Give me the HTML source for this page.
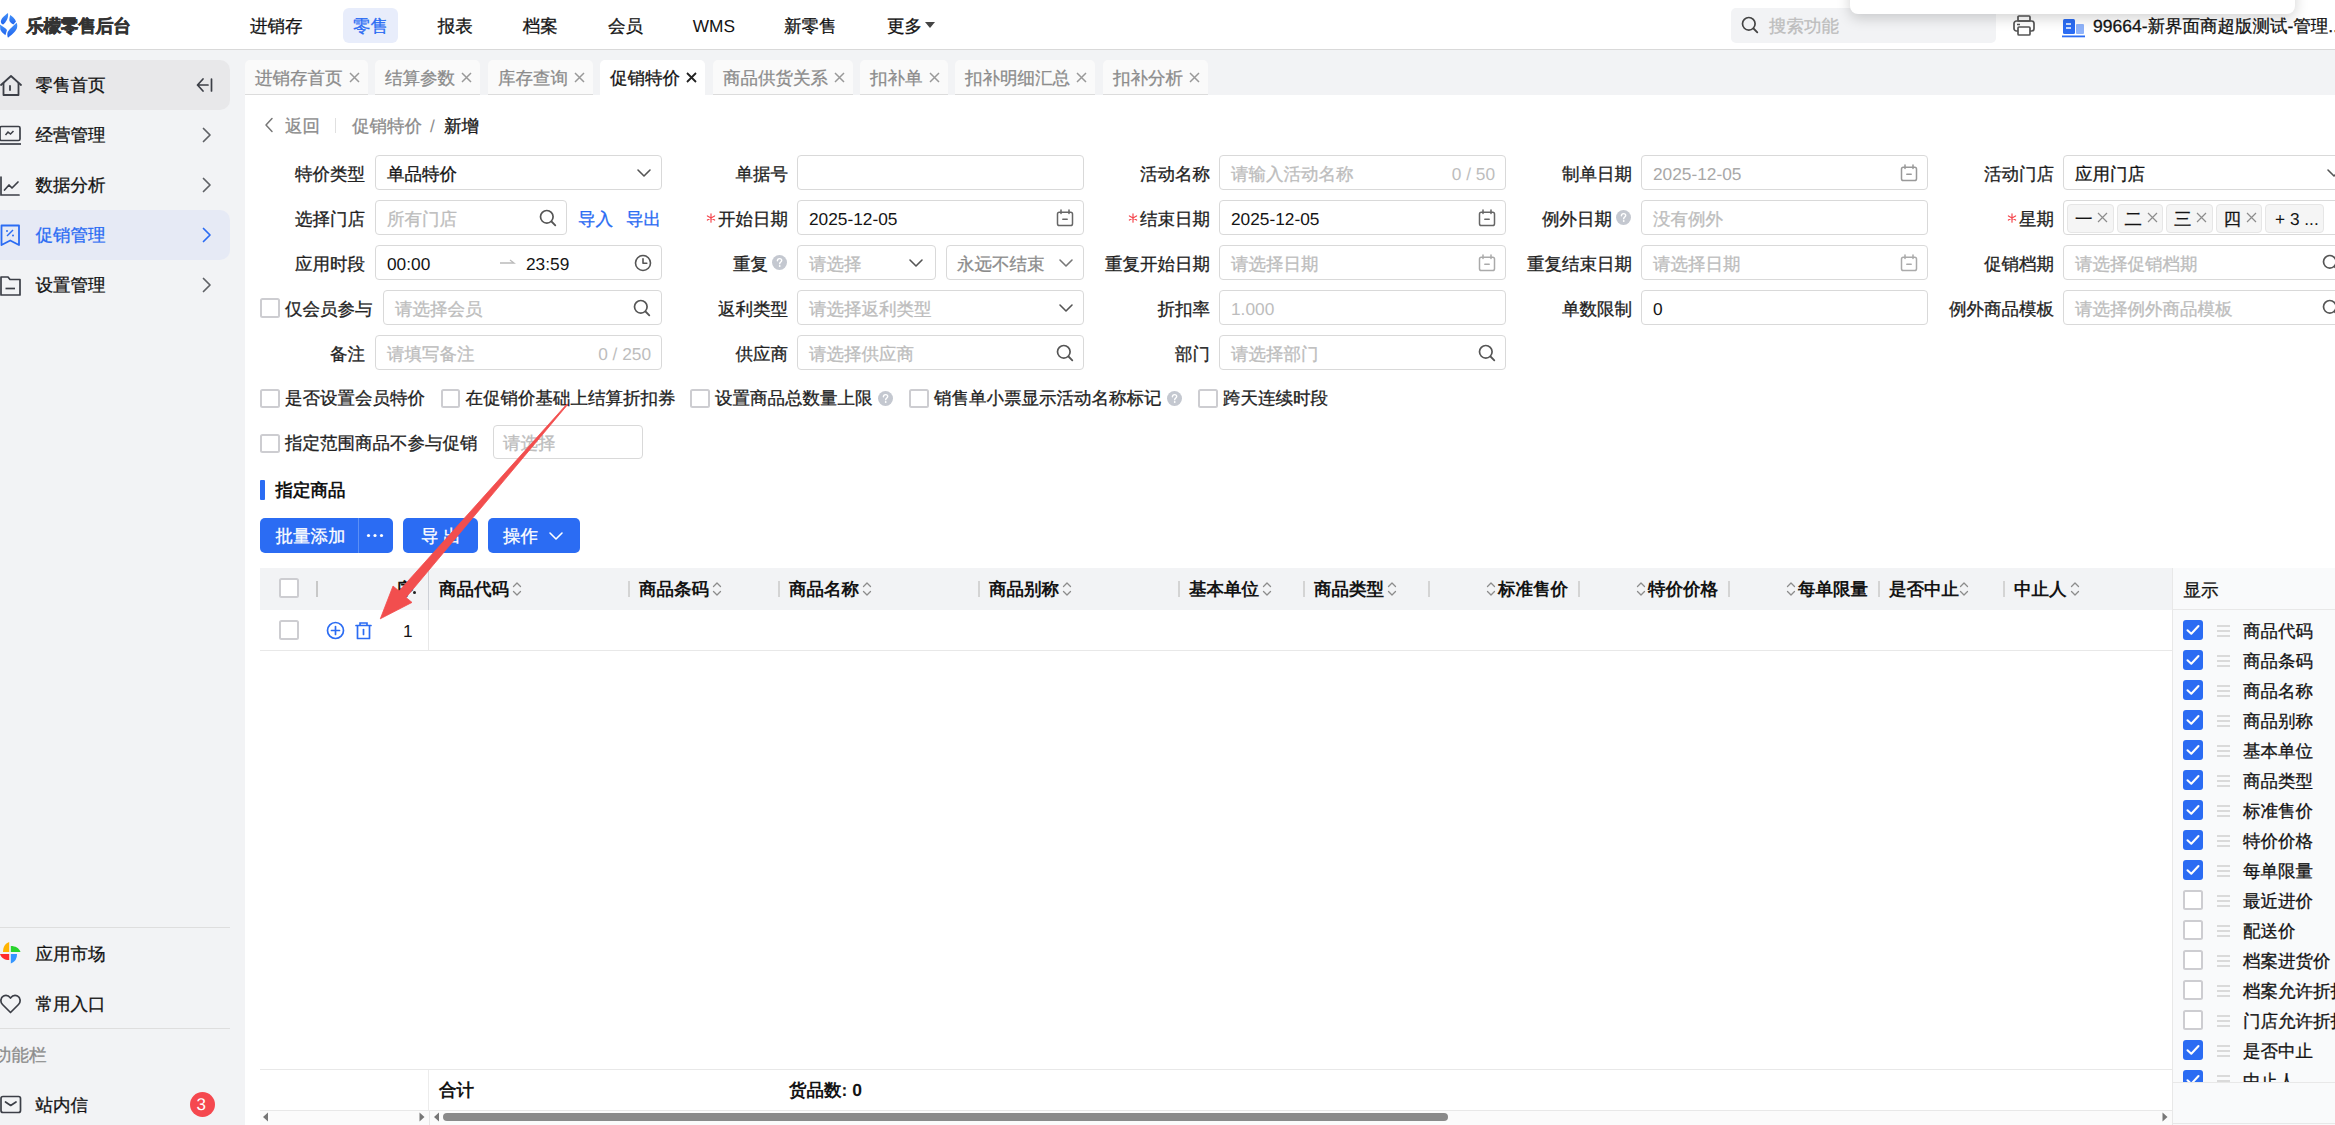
<!DOCTYPE html><html><head><meta charset="utf-8"><style>
html,body{margin:0;padding:0;width:2335px;height:1125px;overflow:hidden;background:#fff;font-family:"Liberation Sans",sans-serif;}
.t{position:absolute;white-space:nowrap;-webkit-text-stroke-width:0.3px;text-rendering:geometricPrecision;}
.b{position:absolute;box-sizing:content-box;}
</style></head><body>
<div class="b" style="left:0px;top:49px;width:245px;height:1076px;background:#f2f3f5"></div>
<div class="b" style="left:245px;top:49px;width:2090px;height:46px;background:#f2f3f5"></div>
<div class="b" style="left:0px;top:0px;width:2335px;height:49px;background:#fff"></div>
<div class="b" style="left:0px;top:49px;width:2335px;height:1px;background:#d9d9d9"></div>
<svg class="b" style="left:0px;top:12px" width="18" height="27" viewBox="0 0 18 27" fill="none"><defs><linearGradient id="lg" x1="0" y1="0" x2="0" y2="1"><stop offset="0" stop-color="#4592f8"/><stop offset="1" stop-color="#1f63ee"/></linearGradient></defs><g fill="url(#lg)"><path d="M8 1 C4 4 1 6.5 0.8 9.8 C1 11.5 2 12.3 3.2 12.6 C6 10 8.8 6 8 1 Z"/><path d="M10.2 3 C12.5 4.5 15 6.5 16 9.4 L13.4 12.6 C11 11 9 9.5 9.3 7.5 C9.4 6 9.8 4.5 10.2 3 Z"/><path d="M0 12.5 C2 14 5 15.5 7 18 L5.4 23.2 C3 21.5 1 19.5 0.3 17.5 Z"/><path d="M16.6 10.7 C17.3 12 17.5 14 17 16 C15.5 20.5 11 23 8 25.8 C7.2 24 7 21.5 7.8 19.7 C10 16 14 13.5 16.6 10.7 Z"/></g></svg>
<div class="t" style="left:26px;top:13.5px;height:24px;line-height:24px;color:#333;font-size:17.8px;font-weight:700;-webkit-text-stroke:0.5px #333;letter-spacing:-0.35px;">乐檬零售后台</div>
<div class="b" style="left:343px;top:8px;width:55px;height:35px;background:#e8edfb;border-radius:6px"></div>
<div class="t" style="left:250px;top:13.5px;height:24px;line-height:24px;color:#141414;font-size:17.5px;font-weight:400;">进销存</div>
<div class="t" style="left:353px;top:13.5px;height:24px;line-height:24px;color:#2b6cf3;font-size:17.5px;font-weight:400;">零售</div>
<div class="t" style="left:437.7px;top:13.5px;height:24px;line-height:24px;color:#141414;font-size:17.5px;font-weight:400;">报表</div>
<div class="t" style="left:522.7px;top:13.5px;height:24px;line-height:24px;color:#141414;font-size:17.5px;font-weight:400;">档案</div>
<div class="t" style="left:608px;top:13.5px;height:24px;line-height:24px;color:#141414;font-size:17.5px;font-weight:400;">会员</div>
<div class="t" style="left:692.7px;top:13.5px;height:24px;line-height:24px;color:#141414;font-size:17.3px;font-weight:400;-webkit-text-stroke-width:0;">WMS</div>
<div class="t" style="left:784px;top:13.5px;height:24px;line-height:24px;color:#141414;font-size:17.5px;font-weight:400;">新零售</div>
<div class="t" style="left:887px;top:13.5px;height:24px;line-height:24px;color:#141414;font-size:17.5px;font-weight:400;">更多</div>
<svg class="b" style="left:924px;top:21px" width="12" height="8" viewBox="0 0 12 8" fill="none"><path d="M1 1 L11 1 L6 7 Z" fill="#444"/></svg>
<div class="b" style="left:1731px;top:8px;width:265px;height:35px;background:#f2f3f5;border-radius:5px"></div>
<svg class="b" style="left:1741px;top:16px" width="18" height="18" viewBox="0 0 18 18" fill="none"><circle cx="7.8" cy="7.8" r="6.3" stroke="#444" stroke-width="1.7"/><path d="M12.5 12.5 L16.3 16.3" stroke="#444" stroke-width="1.8" stroke-linecap="round"/></svg>
<div class="t" style="left:1769px;top:13.5px;height:24px;line-height:24px;color:#bdbdbd;font-size:17.5px;font-weight:400;">搜索功能</div>
<svg class="b" style="left:2012px;top:14px" width="24" height="24" viewBox="0 0 24 24" fill="none"><rect x="6" y="2" width="12" height="5" rx="1" stroke="#555" stroke-width="1.7"/><rect x="2" y="7" width="20" height="10" rx="2.5" stroke="#555" stroke-width="1.7"/><rect x="6" y="13" width="12" height="8" rx="1" fill="#fff" stroke="#555" stroke-width="1.7"/><path d="M5 10.5 H8" stroke="#555" stroke-width="1.5"/></svg>
<svg class="b" style="left:2062px;top:18px" width="24" height="20" viewBox="0 0 24 20" fill="none"><rect x="1" y="1" width="12" height="15" rx="1.5" fill="#2b6cf3"/><rect x="14" y="6" width="8" height="10" rx="1" fill="#8fb3fa"/><path d="M4 6 H9 M4 10 H9" stroke="#fff" stroke-width="1.5"/><rect x="0" y="17.5" width="23" height="1.8" fill="#2b6cf3"/></svg>
<div class="t" style="left:2093px;top:13.5px;height:24px;line-height:24px;color:#141414;font-size:17.5px;font-weight:400;">99664-新界面商超版测试-管理...</div>
<div class="b" style="left:1850px;top:-20px;width:445px;height:34px;background:#fff;border-radius:8px;box-shadow:0 4px 14px rgba(0,0,0,.18)"></div>
<div class="b" style="left:0px;top:60px;width:230px;height:50px;background:#e8e8ea;border-radius:0 10px 10px 0"></div>
<div class="b" style="left:0px;top:210px;width:230px;height:50px;background:#e6eaf5;border-radius:0 10px 10px 0"></div>
<div class="t" style="left:35.5px;top:73.0px;height:24px;line-height:24px;color:#141414;font-size:17.5px;font-weight:400;">零售首页</div>
<div class="t" style="left:35.5px;top:123.0px;height:24px;line-height:24px;color:#141414;font-size:17.5px;font-weight:400;">经营管理</div>
<div class="t" style="left:35.5px;top:173.0px;height:24px;line-height:24px;color:#141414;font-size:17.5px;font-weight:400;">数据分析</div>
<div class="t" style="left:35.5px;top:223.0px;height:24px;line-height:24px;color:#2b6cf3;font-size:17.5px;font-weight:400;">促销管理</div>
<div class="t" style="left:35.5px;top:273.0px;height:24px;line-height:24px;color:#141414;font-size:17.5px;font-weight:400;">设置管理</div>
<svg class="b" style="left:0px;top:74px" width="24" height="24" viewBox="0 0 24 24" fill="none"><path d="M1 11 L11 2 L21 11" stroke="#3c3f47" stroke-width="1.8" stroke-linecap="round" stroke-linejoin="round"/><path d="M3.5 9 V21 H18.5 V9" stroke="#3c3f47" stroke-width="1.8" stroke-linejoin="round"/><path d="M10 12 V16" stroke="#3c3f47" stroke-width="1.8" stroke-linecap="round"/></svg>
<svg class="b" style="left:196px;top:77px" width="18" height="16" viewBox="0 0 18 16" fill="none"><path d="M7 2 L1.5 8 L7 14 M1.5 8 H12 M15.5 2 V14" stroke="#3c3f47" stroke-width="1.7" stroke-linecap="round" stroke-linejoin="round"/></svg>
<svg class="b" style="left:0px;top:125px" width="22" height="22" viewBox="0 0 22 22" fill="none"><rect x="0" y="1.5" width="20" height="14" rx="1.5" stroke="#3c3f47" stroke-width="1.7"/><path d="M0 19 H21" stroke="#3c3f47" stroke-width="1.7"/><path d="M5.5 10 L8 7 L10.5 9 L13.5 6" stroke="#3c3f47" stroke-width="1.5"/></svg>
<svg class="b" style="left:0px;top:176px" width="22" height="20" viewBox="0 0 22 20" fill="none"><path d="M1 1 V19 H19" stroke="#3c3f47" stroke-width="1.7" stroke-linecap="round"/><path d="M4.5 14 L9 9 L12 12 L18 6" stroke="#3c3f47" stroke-width="1.7" stroke-linecap="round" stroke-linejoin="round"/></svg>
<svg class="b" style="left:0px;top:224px" width="22" height="22" viewBox="0 0 22 22" fill="none"><path d="M1.5 1.5 H19 V21 L10.2 16.5 L1.5 21 Z" stroke="#2b6cf3" stroke-width="1.8" stroke-linejoin="round"/><path d="M7 12 L13 6" stroke="#2b6cf3" stroke-width="1.5"/><circle cx="7" cy="7" r="1" fill="#2b6cf3"/><circle cx="13" cy="11.5" r="1" fill="#2b6cf3"/></svg>
<svg class="b" style="left:0px;top:275px" width="22" height="22" viewBox="0 0 22 22" fill="none"><path d="M1 2 H8 L10 4.5 H20 V20 H1 Z" stroke="#3c3f47" stroke-width="1.7" stroke-linejoin="round"/><path d="M5.5 13.5 H15" stroke="#3c3f47" stroke-width="1.7"/></svg>
<svg class="b" style="left:201px;top:127px" width="12" height="16" viewBox="0 0 12 16" fill="none"><path d="M2.5 1.5 L9 8 L2.5 14.5" stroke="#5f6166" stroke-width="1.7" stroke-linecap="round" stroke-linejoin="round"/></svg>
<svg class="b" style="left:201px;top:177px" width="12" height="16" viewBox="0 0 12 16" fill="none"><path d="M2.5 1.5 L9 8 L2.5 14.5" stroke="#5f6166" stroke-width="1.7" stroke-linecap="round" stroke-linejoin="round"/></svg>
<svg class="b" style="left:201px;top:227px" width="12" height="16" viewBox="0 0 12 16" fill="none"><path d="M2.5 1.5 L9 8 L2.5 14.5" stroke="#2b6cf3" stroke-width="1.7" stroke-linecap="round" stroke-linejoin="round"/></svg>
<svg class="b" style="left:201px;top:277px" width="12" height="16" viewBox="0 0 12 16" fill="none"><path d="M2.5 1.5 L9 8 L2.5 14.5" stroke="#5f6166" stroke-width="1.7" stroke-linecap="round" stroke-linejoin="round"/></svg>
<div class="b" style="left:0px;top:927px;width:230px;height:1px;background:#dedede"></div>
<div class="b" style="left:0px;top:1028px;width:230px;height:1px;background:#dedede"></div>
<div class="t" style="left:35.5px;top:941.5px;height:24px;line-height:24px;color:#141414;font-size:17.5px;font-weight:400;">应用市场</div>
<div class="t" style="left:35.5px;top:992.0px;height:24px;line-height:24px;color:#141414;font-size:17.5px;font-weight:400;">常用入口</div>
<div class="t" style="left:-6px;top:1042.5px;height:24px;line-height:24px;color:#8c8c8c;font-size:17.5px;font-weight:400;">功能栏</div>
<div class="t" style="left:35.5px;top:1092.5px;height:24px;line-height:24px;color:#141414;font-size:17.5px;font-weight:400;">站内信</div>
<svg class="b" style="left:0px;top:935px" width="22" height="30" viewBox="0 0 22 30" fill="none"><path d="M9.2 7 L9.2 17 L3 17 C3 12 5 8.5 9.2 7 Z" fill="#ffb300"/><path d="M10.8 17 L10.8 11 C15.5 11 19 13 20.5 17 Z" fill="#28d32c"/><path d="M10.8 19 L17 19 C17 23.5 15 27 10.8 28.5 Z" fill="#3395ff"/><path d="M9.2 19 L9.2 25 C4.5 25 1.5 23 0 19 Z" fill="#ff2b2b"/></svg>
<svg class="b" style="left:0px;top:993px" width="22" height="22" viewBox="0 0 22 22" fill="none"><path d="M10.5 19.5 L2.5 11.5 C0 9 0.5 4.5 3.5 3 C6 1.8 8.8 2.8 10.5 5 C12.2 2.8 15 1.8 17.5 3 C20.5 4.5 21 9 18.5 11.5 Z" stroke="#3c3f47" stroke-width="1.7" stroke-linejoin="round"/></svg>
<svg class="b" style="left:0px;top:1095px" width="22" height="20" viewBox="0 0 22 20" fill="none"><rect x="1" y="1.5" width="19.5" height="16" rx="2" stroke="#3c3f47" stroke-width="1.7"/><path d="M5.5 7 L10.7 10.5 L16 7" stroke="#3c3f47" stroke-width="1.7" stroke-linecap="round" stroke-linejoin="round"/></svg>
<div class="b" style="left:190px;top:1092px;width:25px;height:25px;background:#f5484f;border-radius:50%"></div>
<div class="t" style="left:196.5px;top:1092.5px;height:24px;line-height:24px;color:#fff;font-size:17px;font-weight:400;-webkit-text-stroke-width:0;">3</div>
<div class="b" style="left:245px;top:95px;width:2090px;height:1030px;background:#fff"></div>
<div class="b" style="left:245px;top:60px;width:123px;height:34px;background:#fafafa;border-radius:5px 5px 0 0;border-bottom:1px solid #dcdcdc"></div>
<div class="t" style="left:255px;top:65.5px;height:24px;line-height:24px;color:#8c8c8c;font-size:17.5px;font-weight:400;">进销存首页</div>
<svg class="b" style="left:349px;top:72px" width="11" height="11" viewBox="0 0 11 11" fill="none"><path d="M1 1 L10 10 M10 1 L1 10" stroke="#999" stroke-width="1.5"/></svg>
<div class="b" style="left:375px;top:60px;width:105px;height:34px;background:#fafafa;border-radius:5px 5px 0 0;border-bottom:1px solid #dcdcdc"></div>
<div class="t" style="left:385px;top:65.5px;height:24px;line-height:24px;color:#8c8c8c;font-size:17.5px;font-weight:400;">结算参数</div>
<svg class="b" style="left:461px;top:72px" width="11" height="11" viewBox="0 0 11 11" fill="none"><path d="M1 1 L10 10 M10 1 L1 10" stroke="#999" stroke-width="1.5"/></svg>
<div class="b" style="left:488px;top:60px;width:105px;height:34px;background:#fafafa;border-radius:5px 5px 0 0;border-bottom:1px solid #dcdcdc"></div>
<div class="t" style="left:498px;top:65.5px;height:24px;line-height:24px;color:#8c8c8c;font-size:17.5px;font-weight:400;">库存查询</div>
<svg class="b" style="left:574px;top:72px" width="11" height="11" viewBox="0 0 11 11" fill="none"><path d="M1 1 L10 10 M10 1 L1 10" stroke="#999" stroke-width="1.5"/></svg>
<div class="b" style="left:600px;top:60px;width:105px;height:35px;background:#fff;border-radius:5px 5px 0 0"></div>
<div class="t" style="left:610px;top:65.5px;height:24px;line-height:24px;color:#141414;font-size:17.5px;font-weight:400;">促销特价</div>
<svg class="b" style="left:686px;top:72px" width="11" height="11" viewBox="0 0 11 11" fill="none"><path d="M1 1 L10 10 M10 1 L1 10" stroke="#222" stroke-width="1.8"/></svg>
<div class="b" style="left:713px;top:60px;width:140px;height:34px;background:#fafafa;border-radius:5px 5px 0 0;border-bottom:1px solid #dcdcdc"></div>
<div class="t" style="left:723px;top:65.5px;height:24px;line-height:24px;color:#8c8c8c;font-size:17.5px;font-weight:400;">商品供货关系</div>
<svg class="b" style="left:834px;top:72px" width="11" height="11" viewBox="0 0 11 11" fill="none"><path d="M1 1 L10 10 M10 1 L1 10" stroke="#999" stroke-width="1.5"/></svg>
<div class="b" style="left:860px;top:60px;width:88px;height:34px;background:#fafafa;border-radius:5px 5px 0 0;border-bottom:1px solid #dcdcdc"></div>
<div class="t" style="left:870px;top:65.5px;height:24px;line-height:24px;color:#8c8c8c;font-size:17.5px;font-weight:400;">扣补单</div>
<svg class="b" style="left:929px;top:72px" width="11" height="11" viewBox="0 0 11 11" fill="none"><path d="M1 1 L10 10 M10 1 L1 10" stroke="#999" stroke-width="1.5"/></svg>
<div class="b" style="left:955px;top:60px;width:140px;height:34px;background:#fafafa;border-radius:5px 5px 0 0;border-bottom:1px solid #dcdcdc"></div>
<div class="t" style="left:965px;top:65.5px;height:24px;line-height:24px;color:#8c8c8c;font-size:17.5px;font-weight:400;">扣补明细汇总</div>
<svg class="b" style="left:1076px;top:72px" width="11" height="11" viewBox="0 0 11 11" fill="none"><path d="M1 1 L10 10 M10 1 L1 10" stroke="#999" stroke-width="1.5"/></svg>
<div class="b" style="left:1103px;top:60px;width:105px;height:34px;background:#fafafa;border-radius:5px 5px 0 0;border-bottom:1px solid #dcdcdc"></div>
<div class="t" style="left:1113px;top:65.5px;height:24px;line-height:24px;color:#8c8c8c;font-size:17.5px;font-weight:400;">扣补分析</div>
<svg class="b" style="left:1189px;top:72px" width="11" height="11" viewBox="0 0 11 11" fill="none"><path d="M1 1 L10 10 M10 1 L1 10" stroke="#999" stroke-width="1.5"/></svg>
<svg class="b" style="left:264px;top:117px" width="10" height="16" viewBox="0 0 10 16" fill="none"><path d="M8 1.5 L2 8 L8 14.5" stroke="#777" stroke-width="1.5" stroke-linecap="round" stroke-linejoin="round"/></svg>
<div class="t" style="left:285px;top:113.5px;height:24px;line-height:24px;color:#8c8c8c;font-size:17.5px;font-weight:400;">返回</div>
<div class="b" style="left:335px;top:118px;width:1px;height:15px;background:#e0e0e0"></div>
<div class="t" style="left:352px;top:113.5px;height:24px;line-height:24px;color:#8c8c8c;font-size:17.5px;font-weight:400;">促销特价</div>
<div class="t" style="left:430px;top:113.5px;height:24px;line-height:24px;color:#8c8c8c;font-size:17.3px;font-weight:400;-webkit-text-stroke-width:0;">/</div>
<div class="t" style="left:444px;top:113.5px;height:24px;line-height:24px;color:#141414;font-size:17.5px;font-weight:400;">新增</div>
<div class="t" style="right:1970px;top:161.5px;height:24px;line-height:24px;color:#222222;font-size:17.5px;font-weight:400;">特价类型</div>
<div class="b" style="left:375px;top:155px;width:285px;height:33px;border:1px solid #d9d9d9;border-radius:4px;background:#fff"></div>
<div class="t" style="left:387px;top:161.5px;height:24px;line-height:24px;color:#141414;font-size:17.5px;font-weight:400;">单品特价</div>
<svg class="b" style="left:636px;top:166.5px" width="16" height="12" viewBox="0 0 16 12" fill="none"><path d="M2 3.0 L8 9.0 L14 3.0" stroke="#555" stroke-width="1.6" stroke-linecap="round" stroke-linejoin="round"/></svg>
<div class="t" style="right:1970px;top:206.5px;height:24px;line-height:24px;color:#222222;font-size:17.5px;font-weight:400;">选择门店</div>
<div class="b" style="left:375px;top:200px;width:190px;height:33px;border:1px solid #d9d9d9;border-radius:4px;background:#fff"></div>
<div class="t" style="left:387px;top:206.5px;height:24px;line-height:24px;color:#bdbdbd;font-size:17.5px;font-weight:400;">所有门店</div>
<svg class="b" style="left:539px;top:209px" width="18" height="18" viewBox="0 0 18 18" fill="none"><circle cx="7.8" cy="7.8" r="6.3" stroke="#555" stroke-width="1.7"/><path d="M12.5 12.5 L16.3 16.3" stroke="#555" stroke-width="1.8" stroke-linecap="round"/></svg>
<div class="t" style="left:578px;top:206.5px;height:24px;line-height:24px;color:#2b6cf3;font-size:17.5px;font-weight:400;">导入</div>
<div class="t" style="left:626px;top:206.5px;height:24px;line-height:24px;color:#2b6cf3;font-size:17.5px;font-weight:400;">导出</div>
<div class="t" style="right:1970px;top:251.5px;height:24px;line-height:24px;color:#222222;font-size:17.5px;font-weight:400;">应用时段</div>
<div class="b" style="left:375px;top:245px;width:285px;height:33px;border:1px solid #d9d9d9;border-radius:4px;background:#fff"></div>
<div class="t" style="left:387px;top:251.5px;height:24px;line-height:24px;color:#141414;font-size:17.3px;font-weight:400;-webkit-text-stroke-width:0;">00:00</div>
<svg class="b" style="left:499px;top:257px" width="17" height="10" viewBox="0 0 17 10" fill="none"><path d="M1 6 H15 L11 3" stroke="#bbb" stroke-width="1.3" fill="none"/></svg>
<div class="t" style="left:526px;top:251.5px;height:24px;line-height:24px;color:#141414;font-size:17.3px;font-weight:400;-webkit-text-stroke-width:0;">23:59</div>
<svg class="b" style="left:634px;top:254px" width="18" height="18" viewBox="0 0 18 18" fill="none"><circle cx="9" cy="9" r="7.5" stroke="#555" stroke-width="1.6"/><path d="M9 4.8 V9.3 H12.8" stroke="#555" stroke-width="1.6" stroke-linecap="round" stroke-linejoin="round"/></svg>
<div class="b" style="left:260px;top:298.3px;width:15.5px;height:15.5px;border:2px solid #cdcdd1;border-radius:2.5px;background:#fff"></div>
<div class="t" style="left:285px;top:296.5px;height:24px;line-height:24px;color:#222222;font-size:17.5px;font-weight:400;">仅会员参与</div>
<div class="b" style="left:383px;top:290px;width:277px;height:33px;border:1px solid #d9d9d9;border-radius:4px;background:#fff"></div>
<div class="t" style="left:395px;top:296.5px;height:24px;line-height:24px;color:#bdbdbd;font-size:17.5px;font-weight:400;">请选择会员</div>
<svg class="b" style="left:633px;top:299px" width="18" height="18" viewBox="0 0 18 18" fill="none"><circle cx="7.8" cy="7.8" r="6.3" stroke="#555" stroke-width="1.7"/><path d="M12.5 12.5 L16.3 16.3" stroke="#555" stroke-width="1.8" stroke-linecap="round"/></svg>
<div class="t" style="right:1970px;top:341.5px;height:24px;line-height:24px;color:#222222;font-size:17.5px;font-weight:400;">备注</div>
<div class="b" style="left:375px;top:335px;width:285px;height:33px;border:1px solid #d9d9d9;border-radius:4px;background:#fff"></div>
<div class="t" style="left:387px;top:341.5px;height:24px;line-height:24px;color:#bdbdbd;font-size:17.5px;font-weight:400;">请填写备注</div>
<div class="t" style="right:1684px;top:341.5px;height:24px;line-height:24px;color:#bdbdbd;font-size:17.3px;font-weight:400;-webkit-text-stroke-width:0;">0 / 250</div>
<div class="t" style="right:1547px;top:161.5px;height:24px;line-height:24px;color:#222222;font-size:17.5px;font-weight:400;">单据号</div>
<div class="b" style="left:797px;top:155px;width:285px;height:33px;border:1px solid #d9d9d9;border-radius:4px;background:#fff"></div>
<div class="t" style="right:1547px;top:206.5px;height:24px;line-height:24px;color:#222222;font-size:17.5px;font-weight:400;">开始日期</div>
<svg class="b" style="left:706.3px;top:212.5px" width="10" height="10" viewBox="0 0 10 10" fill="none"><path d="M5 0.8 V9.2 M1.4 2.9 L8.6 7.1 M8.6 2.9 L1.4 7.1" stroke="#f5484f" stroke-width="1.2" stroke-linecap="round"/></svg>
<div class="b" style="left:797px;top:200px;width:285px;height:33px;border:1px solid #d9d9d9;border-radius:4px;background:#fff"></div>
<div class="t" style="left:809px;top:206.5px;height:24px;line-height:24px;color:#141414;font-size:17.3px;font-weight:400;-webkit-text-stroke-width:0;">2025-12-05</div>
<svg class="b" style="left:1056px;top:209px" width="18" height="18" viewBox="0 0 18 18" fill="none"><rect x="1.5" y="3.2" width="15" height="13.3" rx="1.8" stroke="#666" stroke-width="1.5"/><path d="M5 1 V4.5 M13 1 V4.5" stroke="#666" stroke-width="1.5" stroke-linecap="round"/><path d="M6.8 10.2 H11.2" stroke="#666" stroke-width="1.5" stroke-linecap="round"/></svg>
<svg class="b" style="left:772px;top:255.0px" width="15" height="15" viewBox="0 0 15 15" fill="none"><circle cx="7.5" cy="7.5" r="7.5" fill="#c4c8d0"/><path d="M5.4 5.8 C5.4 4.4 6.4 3.6 7.6 3.6 C8.8 3.6 9.7 4.4 9.7 5.5 C9.7 6.9 7.7 7.1 7.7 8.7" stroke="#fff" stroke-width="1.4" stroke-linecap="round" fill="none"/><circle cx="7.7" cy="11" r="0.9" fill="#fff"/></svg>
<div class="t" style="right:1567px;top:251.5px;height:24px;line-height:24px;color:#222222;font-size:17.5px;font-weight:400;">重复</div>
<div class="b" style="left:797px;top:245px;width:137px;height:33px;border:1px solid #d9d9d9;border-radius:4px;background:#fff"></div>
<div class="t" style="left:809px;top:251.5px;height:24px;line-height:24px;color:#bdbdbd;font-size:17.5px;font-weight:400;">请选择</div>
<svg class="b" style="left:908px;top:256.5px" width="16" height="12" viewBox="0 0 16 12" fill="none"><path d="M2 3.0 L8 9.0 L14 3.0" stroke="#555" stroke-width="1.6" stroke-linecap="round" stroke-linejoin="round"/></svg>
<div class="b" style="left:946px;top:245px;width:136px;height:33px;border:1px solid #d9d9d9;border-radius:4px;background:#fff"></div>
<div class="t" style="left:957px;top:251.5px;height:24px;line-height:24px;color:#8c8c8c;font-size:17.5px;font-weight:400;">永远不结束</div>
<svg class="b" style="left:1058px;top:256.5px" width="16" height="12" viewBox="0 0 16 12" fill="none"><path d="M2 3.0 L8 9.0 L14 3.0" stroke="#777" stroke-width="1.6" stroke-linecap="round" stroke-linejoin="round"/></svg>
<div class="t" style="right:1547px;top:296.5px;height:24px;line-height:24px;color:#222222;font-size:17.5px;font-weight:400;">返利类型</div>
<div class="b" style="left:797px;top:290px;width:285px;height:33px;border:1px solid #d9d9d9;border-radius:4px;background:#fff"></div>
<div class="t" style="left:809px;top:296.5px;height:24px;line-height:24px;color:#bdbdbd;font-size:17.5px;font-weight:400;">请选择返利类型</div>
<svg class="b" style="left:1058px;top:301.5px" width="16" height="12" viewBox="0 0 16 12" fill="none"><path d="M2 3.0 L8 9.0 L14 3.0" stroke="#555" stroke-width="1.6" stroke-linecap="round" stroke-linejoin="round"/></svg>
<div class="t" style="right:1547px;top:341.5px;height:24px;line-height:24px;color:#222222;font-size:17.5px;font-weight:400;">供应商</div>
<div class="b" style="left:797px;top:335px;width:285px;height:33px;border:1px solid #d9d9d9;border-radius:4px;background:#fff"></div>
<div class="t" style="left:809px;top:341.5px;height:24px;line-height:24px;color:#bdbdbd;font-size:17.5px;font-weight:400;">请选择供应商</div>
<svg class="b" style="left:1056px;top:344px" width="18" height="18" viewBox="0 0 18 18" fill="none"><circle cx="7.8" cy="7.8" r="6.3" stroke="#555" stroke-width="1.7"/><path d="M12.5 12.5 L16.3 16.3" stroke="#555" stroke-width="1.8" stroke-linecap="round"/></svg>
<div class="t" style="right:1125px;top:161.5px;height:24px;line-height:24px;color:#222222;font-size:17.5px;font-weight:400;">活动名称</div>
<div class="b" style="left:1219px;top:155px;width:285px;height:33px;border:1px solid #d9d9d9;border-radius:4px;background:#fff"></div>
<div class="t" style="left:1231px;top:161.5px;height:24px;line-height:24px;color:#bdbdbd;font-size:17.5px;font-weight:400;">请输入活动名称</div>
<div class="t" style="right:840px;top:161.5px;height:24px;line-height:24px;color:#bdbdbd;font-size:17.3px;font-weight:400;-webkit-text-stroke-width:0;">0 / 50</div>
<div class="t" style="right:1125px;top:206.5px;height:24px;line-height:24px;color:#222222;font-size:17.5px;font-weight:400;">结束日期</div>
<svg class="b" style="left:1128.3px;top:212.5px" width="10" height="10" viewBox="0 0 10 10" fill="none"><path d="M5 0.8 V9.2 M1.4 2.9 L8.6 7.1 M8.6 2.9 L1.4 7.1" stroke="#f5484f" stroke-width="1.2" stroke-linecap="round"/></svg>
<div class="b" style="left:1219px;top:200px;width:285px;height:33px;border:1px solid #d9d9d9;border-radius:4px;background:#fff"></div>
<div class="t" style="left:1231px;top:206.5px;height:24px;line-height:24px;color:#141414;font-size:17.3px;font-weight:400;-webkit-text-stroke-width:0;">2025-12-05</div>
<svg class="b" style="left:1478px;top:209px" width="18" height="18" viewBox="0 0 18 18" fill="none"><rect x="1.5" y="3.2" width="15" height="13.3" rx="1.8" stroke="#666" stroke-width="1.5"/><path d="M5 1 V4.5 M13 1 V4.5" stroke="#666" stroke-width="1.5" stroke-linecap="round"/><path d="M6.8 10.2 H11.2" stroke="#666" stroke-width="1.5" stroke-linecap="round"/></svg>
<div class="t" style="right:1125px;top:251.5px;height:24px;line-height:24px;color:#222222;font-size:17.5px;font-weight:400;">重复开始日期</div>
<div class="b" style="left:1219px;top:245px;width:285px;height:33px;border:1px solid #d9d9d9;border-radius:4px;background:#fff"></div>
<div class="t" style="left:1231px;top:251.5px;height:24px;line-height:24px;color:#bdbdbd;font-size:17.5px;font-weight:400;">请选择日期</div>
<svg class="b" style="left:1478px;top:254px" width="18" height="18" viewBox="0 0 18 18" fill="none"><rect x="1.5" y="3.2" width="15" height="13.3" rx="1.8" stroke="#aaa" stroke-width="1.5"/><path d="M5 1 V4.5 M13 1 V4.5" stroke="#aaa" stroke-width="1.5" stroke-linecap="round"/><path d="M6.8 10.2 H11.2" stroke="#aaa" stroke-width="1.5" stroke-linecap="round"/></svg>
<div class="t" style="right:1125px;top:296.5px;height:24px;line-height:24px;color:#222222;font-size:17.5px;font-weight:400;">折扣率</div>
<div class="b" style="left:1219px;top:290px;width:285px;height:33px;border:1px solid #d9d9d9;border-radius:4px;background:#fff"></div>
<div class="t" style="left:1231px;top:296.5px;height:24px;line-height:24px;color:#bdbdbd;font-size:17.3px;font-weight:400;-webkit-text-stroke-width:0;">1.000</div>
<div class="t" style="right:1125px;top:341.5px;height:24px;line-height:24px;color:#222222;font-size:17.5px;font-weight:400;">部门</div>
<div class="b" style="left:1219px;top:335px;width:285px;height:33px;border:1px solid #d9d9d9;border-radius:4px;background:#fff"></div>
<div class="t" style="left:1231px;top:341.5px;height:24px;line-height:24px;color:#bdbdbd;font-size:17.5px;font-weight:400;">请选择部门</div>
<svg class="b" style="left:1478px;top:344px" width="18" height="18" viewBox="0 0 18 18" fill="none"><circle cx="7.8" cy="7.8" r="6.3" stroke="#555" stroke-width="1.7"/><path d="M12.5 12.5 L16.3 16.3" stroke="#555" stroke-width="1.8" stroke-linecap="round"/></svg>
<div class="t" style="right:703px;top:161.5px;height:24px;line-height:24px;color:#222222;font-size:17.5px;font-weight:400;">制单日期</div>
<div class="b" style="left:1641px;top:155px;width:285px;height:33px;border:1px solid #d9d9d9;border-radius:4px;background:#fff"></div>
<div class="t" style="left:1653px;top:161.5px;height:24px;line-height:24px;color:#a8a8a8;font-size:17.3px;font-weight:400;-webkit-text-stroke-width:0;">2025-12-05</div>
<svg class="b" style="left:1900px;top:164px" width="18" height="18" viewBox="0 0 18 18" fill="none"><rect x="1.5" y="3.2" width="15" height="13.3" rx="1.8" stroke="#999" stroke-width="1.5"/><path d="M5 1 V4.5 M13 1 V4.5" stroke="#999" stroke-width="1.5" stroke-linecap="round"/><path d="M6.8 10.2 H11.2" stroke="#999" stroke-width="1.5" stroke-linecap="round"/></svg>
<svg class="b" style="left:1616px;top:210.0px" width="15" height="15" viewBox="0 0 15 15" fill="none"><circle cx="7.5" cy="7.5" r="7.5" fill="#c4c8d0"/><path d="M5.4 5.8 C5.4 4.4 6.4 3.6 7.6 3.6 C8.8 3.6 9.7 4.4 9.7 5.5 C9.7 6.9 7.7 7.1 7.7 8.7" stroke="#fff" stroke-width="1.4" stroke-linecap="round" fill="none"/><circle cx="7.7" cy="11" r="0.9" fill="#fff"/></svg>
<div class="t" style="right:723px;top:206.5px;height:24px;line-height:24px;color:#222222;font-size:17.5px;font-weight:400;">例外日期</div>
<div class="b" style="left:1641px;top:200px;width:285px;height:33px;border:1px solid #d9d9d9;border-radius:4px;background:#fff"></div>
<div class="t" style="left:1653px;top:206.5px;height:24px;line-height:24px;color:#bdbdbd;font-size:17.5px;font-weight:400;">没有例外</div>
<div class="t" style="right:703px;top:251.5px;height:24px;line-height:24px;color:#222222;font-size:17.5px;font-weight:400;">重复结束日期</div>
<div class="b" style="left:1641px;top:245px;width:285px;height:33px;border:1px solid #d9d9d9;border-radius:4px;background:#fff"></div>
<div class="t" style="left:1653px;top:251.5px;height:24px;line-height:24px;color:#bdbdbd;font-size:17.5px;font-weight:400;">请选择日期</div>
<svg class="b" style="left:1900px;top:254px" width="18" height="18" viewBox="0 0 18 18" fill="none"><rect x="1.5" y="3.2" width="15" height="13.3" rx="1.8" stroke="#aaa" stroke-width="1.5"/><path d="M5 1 V4.5 M13 1 V4.5" stroke="#aaa" stroke-width="1.5" stroke-linecap="round"/><path d="M6.8 10.2 H11.2" stroke="#aaa" stroke-width="1.5" stroke-linecap="round"/></svg>
<div class="t" style="right:703px;top:296.5px;height:24px;line-height:24px;color:#222222;font-size:17.5px;font-weight:400;">单数限制</div>
<div class="b" style="left:1641px;top:290px;width:285px;height:33px;border:1px solid #d9d9d9;border-radius:4px;background:#fff"></div>
<div class="t" style="left:1653px;top:296.5px;height:24px;line-height:24px;color:#141414;font-size:17.3px;font-weight:400;-webkit-text-stroke-width:0;">0</div>
<div class="t" style="right:281px;top:161.5px;height:24px;line-height:24px;color:#222222;font-size:17.5px;font-weight:400;">活动门店</div>
<div class="b" style="left:2063px;top:155px;width:298px;height:33px;border:1px solid #d9d9d9;border-radius:4px;background:#fff"></div>
<div class="t" style="left:2075px;top:161.5px;height:24px;line-height:24px;color:#141414;font-size:17.5px;font-weight:400;">应用门店</div>
<svg class="b" style="left:2326px;top:166.5px" width="16" height="12" viewBox="0 0 16 12" fill="none"><path d="M2 3.0 L8 9.0 L14 3.0" stroke="#555" stroke-width="1.6" stroke-linecap="round" stroke-linejoin="round"/></svg>
<div class="t" style="right:281px;top:206.5px;height:24px;line-height:24px;color:#222222;font-size:17.5px;font-weight:400;">星期</div>
<svg class="b" style="left:2006.9px;top:212.5px" width="10" height="10" viewBox="0 0 10 10" fill="none"><path d="M5 0.8 V9.2 M1.4 2.9 L8.6 7.1 M8.6 2.9 L1.4 7.1" stroke="#f5484f" stroke-width="1.2" stroke-linecap="round"/></svg>
<div class="b" style="left:2063px;top:200px;width:298px;height:33px;border:1px solid #d9d9d9;border-radius:4px;background:#fff"></div>
<div class="b" style="left:2067px;top:203.5px;width:45px;height:27px;background:#f5f5f5;border:1px solid #e6e6e6;border-radius:4px"></div>
<div class="t" style="left:2075px;top:206.5px;height:24px;line-height:24px;color:#141414;font-size:17.5px;font-weight:400;">一</div>
<svg class="b" style="left:2097px;top:212px" width="11" height="11" viewBox="0 0 11 11" fill="none"><path d="M1 1 L10 10 M10 1 L1 10" stroke="#8c8c8c" stroke-width="1.2"/></svg>
<div class="b" style="left:2116.5px;top:203.5px;width:44.5px;height:27px;background:#f5f5f5;border:1px solid #e6e6e6;border-radius:4px"></div>
<div class="t" style="left:2124.5px;top:206.5px;height:24px;line-height:24px;color:#141414;font-size:17.5px;font-weight:400;">二</div>
<svg class="b" style="left:2146.5px;top:212px" width="11" height="11" viewBox="0 0 11 11" fill="none"><path d="M1 1 L10 10 M10 1 L1 10" stroke="#8c8c8c" stroke-width="1.2"/></svg>
<div class="b" style="left:2166px;top:203.5px;width:44.5px;height:27px;background:#f5f5f5;border:1px solid #e6e6e6;border-radius:4px"></div>
<div class="t" style="left:2174px;top:206.5px;height:24px;line-height:24px;color:#141414;font-size:17.5px;font-weight:400;">三</div>
<svg class="b" style="left:2196px;top:212px" width="11" height="11" viewBox="0 0 11 11" fill="none"><path d="M1 1 L10 10 M10 1 L1 10" stroke="#8c8c8c" stroke-width="1.2"/></svg>
<div class="b" style="left:2215.5px;top:203.5px;width:44.0px;height:27px;background:#f5f5f5;border:1px solid #e6e6e6;border-radius:4px"></div>
<div class="t" style="left:2223.5px;top:206.5px;height:24px;line-height:24px;color:#141414;font-size:17.5px;font-weight:400;">四</div>
<svg class="b" style="left:2245.5px;top:212px" width="11" height="11" viewBox="0 0 11 11" fill="none"><path d="M1 1 L10 10 M10 1 L1 10" stroke="#8c8c8c" stroke-width="1.2"/></svg>
<div class="b" style="left:2265px;top:203.5px;width:57px;height:27px;background:#f5f5f5;border:1px solid #e6e6e6;border-radius:4px"></div>
<div class="t" style="left:2275px;top:206.5px;height:24px;line-height:24px;color:#141414;font-size:17.3px;font-weight:400;-webkit-text-stroke-width:0;">+ 3 ...</div>
<div class="t" style="right:281px;top:251.5px;height:24px;line-height:24px;color:#222222;font-size:17.5px;font-weight:400;">促销档期</div>
<div class="b" style="left:2063px;top:245px;width:298px;height:33px;border:1px solid #d9d9d9;border-radius:4px;background:#fff"></div>
<div class="t" style="left:2075px;top:251.5px;height:24px;line-height:24px;color:#bdbdbd;font-size:17.5px;font-weight:400;">请选择促销档期</div>
<svg class="b" style="left:2322px;top:254px" width="18" height="18" viewBox="0 0 18 18" fill="none"><circle cx="7.8" cy="7.8" r="6.3" stroke="#555" stroke-width="1.7"/><path d="M12.5 12.5 L16.3 16.3" stroke="#555" stroke-width="1.8" stroke-linecap="round"/></svg>
<div class="t" style="right:281px;top:296.5px;height:24px;line-height:24px;color:#222222;font-size:17.5px;font-weight:400;">例外商品模板</div>
<div class="b" style="left:2063px;top:290px;width:298px;height:33px;border:1px solid #d9d9d9;border-radius:4px;background:#fff"></div>
<div class="t" style="left:2075px;top:296.5px;height:24px;line-height:24px;color:#bdbdbd;font-size:17.5px;font-weight:400;">请选择例外商品模板</div>
<svg class="b" style="left:2322px;top:299px" width="18" height="18" viewBox="0 0 18 18" fill="none"><circle cx="7.8" cy="7.8" r="6.3" stroke="#555" stroke-width="1.7"/><path d="M12.5 12.5 L16.3 16.3" stroke="#555" stroke-width="1.8" stroke-linecap="round"/></svg>
<div class="b" style="left:260px;top:388.5px;width:15.5px;height:15.5px;border:2px solid #cdcdd1;border-radius:2.5px;background:#fff"></div>
<div class="t" style="left:285px;top:385.5px;height:24px;line-height:24px;color:#222222;font-size:17.5px;font-weight:400;">是否设置会员特价</div>
<div class="b" style="left:440.5px;top:388.5px;width:15.5px;height:15.5px;border:2px solid #cdcdd1;border-radius:2.5px;background:#fff"></div>
<div class="t" style="left:465.5px;top:385.5px;height:24px;line-height:24px;color:#222222;font-size:17.5px;font-weight:400;">在促销价基础上结算折扣券</div>
<div class="b" style="left:690px;top:388.5px;width:15.5px;height:15.5px;border:2px solid #cdcdd1;border-radius:2.5px;background:#fff"></div>
<div class="t" style="left:715px;top:385.5px;height:24px;line-height:24px;color:#222222;font-size:17.5px;font-weight:400;">设置商品总数量上限</div>
<div class="b" style="left:909px;top:388.5px;width:15.5px;height:15.5px;border:2px solid #cdcdd1;border-radius:2.5px;background:#fff"></div>
<div class="t" style="left:934px;top:385.5px;height:24px;line-height:24px;color:#222222;font-size:17.5px;font-weight:400;">销售单小票显示活动名称标记</div>
<div class="b" style="left:1198px;top:388.5px;width:15.5px;height:15.5px;border:2px solid #cdcdd1;border-radius:2.5px;background:#fff"></div>
<div class="t" style="left:1223px;top:385.5px;height:24px;line-height:24px;color:#222222;font-size:17.5px;font-weight:400;">跨天连续时段</div>
<svg class="b" style="left:877.5px;top:390.5px" width="15" height="15" viewBox="0 0 15 15" fill="none"><circle cx="7.5" cy="7.5" r="7.5" fill="#c4c8d0"/><path d="M5.4 5.8 C5.4 4.4 6.4 3.6 7.6 3.6 C8.8 3.6 9.7 4.4 9.7 5.5 C9.7 6.9 7.7 7.1 7.7 8.7" stroke="#fff" stroke-width="1.4" stroke-linecap="round" fill="none"/><circle cx="7.7" cy="11" r="0.9" fill="#fff"/></svg>
<svg class="b" style="left:1166.5px;top:390.5px" width="15" height="15" viewBox="0 0 15 15" fill="none"><circle cx="7.5" cy="7.5" r="7.5" fill="#c4c8d0"/><path d="M5.4 5.8 C5.4 4.4 6.4 3.6 7.6 3.6 C8.8 3.6 9.7 4.4 9.7 5.5 C9.7 6.9 7.7 7.1 7.7 8.7" stroke="#fff" stroke-width="1.4" stroke-linecap="round" fill="none"/><circle cx="7.7" cy="11" r="0.9" fill="#fff"/></svg>
<div class="b" style="left:260px;top:433.5px;width:15.5px;height:15.5px;border:2px solid #cdcdd1;border-radius:2.5px;background:#fff"></div>
<div class="t" style="left:285px;top:431.0px;height:24px;line-height:24px;color:#222222;font-size:17.5px;font-weight:400;">指定范围商品不参与促销</div>
<div class="b" style="left:493px;top:425px;width:148px;height:32px;border:1px solid #d9d9d9;border-radius:4px;background:#fff"></div>
<div class="t" style="left:503px;top:431.0px;height:24px;line-height:24px;color:#bdbdbd;font-size:17.5px;font-weight:400;">请选择</div>
<div class="b" style="left:260px;top:480px;width:5px;height:20px;background:#2b6cf3;border-radius:1px"></div>
<div class="t" style="left:275.5px;top:478.0px;height:24px;line-height:24px;color:#141414;font-size:17.5px;font-weight:700;-webkit-text-stroke-width:0;">指定商品</div>
<div class="b" style="left:260px;top:518px;width:133px;height:35px;background:#2b6cf3;border-radius:5px"></div>
<div class="b" style="left:358px;top:518px;width:1px;height:35px;background:#5b8ff6"></div>
<div class="t" style="left:275.5px;top:523.5px;height:24px;line-height:24px;color:#fff;font-size:17.5px;font-weight:400;">批量添加</div>
<svg class="b" style="left:364px;top:532px" width="22" height="7" viewBox="0 0 22 7" fill="none"><circle cx="4.5" cy="3.5" r="1.6" fill="#fff"/><circle cx="11" cy="3.5" r="1.6" fill="#fff"/><circle cx="17.5" cy="3.5" r="1.6" fill="#fff"/></svg>
<div class="b" style="left:403px;top:518px;width:75px;height:35px;background:#2b6cf3;border-radius:5px"></div>
<div class="t" style="left:421px;top:523.5px;height:24px;line-height:24px;color:#fff;font-size:17.5px;font-weight:400;">导 出</div>
<div class="b" style="left:488px;top:518px;width:92px;height:35px;background:#2b6cf3;border-radius:5px"></div>
<div class="t" style="left:503px;top:523.5px;height:24px;line-height:24px;color:#fff;font-size:17.5px;font-weight:400;">操作</div>
<svg class="b" style="left:548px;top:529.5px" width="16" height="12" viewBox="0 0 16 12" fill="none"><path d="M2 3.0 L8 9.0 L14 3.0" stroke="#fff" stroke-width="1.6" stroke-linecap="round" stroke-linejoin="round"/></svg>
<div class="b" style="left:260px;top:568px;width:1912px;height:42px;background:#f2f3f5"></div>
<div class="b" style="left:428px;top:569px;width:1px;height:41px;background:#cdd0d6"></div>
<div class="b" style="left:428px;top:610px;width:1px;height:41px;background:#e8e8e8"></div>
<div class="b" style="left:260px;top:650px;width:1912px;height:1px;background:#e8e8e8"></div>
<div class="b" style="left:279px;top:578.2px;width:15.5px;height:15.5px;border:2px solid #cdcdd1;border-radius:2.5px;background:#fff"></div>
<div class="b" style="left:316px;top:581px;width:2px;height:16px;background:#c8c8c8"></div>
<div class="t" style="left:396px;top:577.0px;height:24px;line-height:24px;color:#141414;font-size:17.5px;font-weight:700;-webkit-text-stroke-width:0;">序</div>
<div class="b" style="left:413px;top:591px;width:3px;height:3px;background:#222;border-radius:50%"></div>
<div class="t" style="left:439px;top:577.0px;height:24px;line-height:24px;color:#141414;font-size:17.5px;font-weight:700;-webkit-text-stroke-width:0;">商品代码</div>
<svg class="b" style="left:512px;top:581px" width="10" height="16" viewBox="0 0 10 16" fill="none"><path d="M1.5 5.5 L5 2 L8.5 5.5 M1.5 10.5 L5 14 L8.5 10.5" stroke="#8c8c8c" stroke-width="1.3" stroke-linecap="round" stroke-linejoin="round"/></svg>
<div class="b" style="left:628px;top:581px;width:2px;height:16px;background:#d4d4d4"></div>
<div class="t" style="left:639px;top:577.0px;height:24px;line-height:24px;color:#141414;font-size:17.5px;font-weight:700;-webkit-text-stroke-width:0;">商品条码</div>
<svg class="b" style="left:712px;top:581px" width="10" height="16" viewBox="0 0 10 16" fill="none"><path d="M1.5 5.5 L5 2 L8.5 5.5 M1.5 10.5 L5 14 L8.5 10.5" stroke="#8c8c8c" stroke-width="1.3" stroke-linecap="round" stroke-linejoin="round"/></svg>
<div class="b" style="left:778px;top:581px;width:2px;height:16px;background:#d4d4d4"></div>
<div class="t" style="left:789px;top:577.0px;height:24px;line-height:24px;color:#141414;font-size:17.5px;font-weight:700;-webkit-text-stroke-width:0;">商品名称</div>
<svg class="b" style="left:862px;top:581px" width="10" height="16" viewBox="0 0 10 16" fill="none"><path d="M1.5 5.5 L5 2 L8.5 5.5 M1.5 10.5 L5 14 L8.5 10.5" stroke="#8c8c8c" stroke-width="1.3" stroke-linecap="round" stroke-linejoin="round"/></svg>
<div class="b" style="left:978px;top:581px;width:2px;height:16px;background:#d4d4d4"></div>
<div class="t" style="left:989px;top:577.0px;height:24px;line-height:24px;color:#141414;font-size:17.5px;font-weight:700;-webkit-text-stroke-width:0;">商品别称</div>
<svg class="b" style="left:1062px;top:581px" width="10" height="16" viewBox="0 0 10 16" fill="none"><path d="M1.5 5.5 L5 2 L8.5 5.5 M1.5 10.5 L5 14 L8.5 10.5" stroke="#8c8c8c" stroke-width="1.3" stroke-linecap="round" stroke-linejoin="round"/></svg>
<div class="b" style="left:1178px;top:581px;width:2px;height:16px;background:#d4d4d4"></div>
<div class="t" style="left:1189px;top:577.0px;height:24px;line-height:24px;color:#141414;font-size:17.5px;font-weight:700;-webkit-text-stroke-width:0;">基本单位</div>
<svg class="b" style="left:1262px;top:581px" width="10" height="16" viewBox="0 0 10 16" fill="none"><path d="M1.5 5.5 L5 2 L8.5 5.5 M1.5 10.5 L5 14 L8.5 10.5" stroke="#8c8c8c" stroke-width="1.3" stroke-linecap="round" stroke-linejoin="round"/></svg>
<div class="b" style="left:1303px;top:581px;width:2px;height:16px;background:#d4d4d4"></div>
<div class="t" style="left:1314px;top:577.0px;height:24px;line-height:24px;color:#141414;font-size:17.5px;font-weight:700;-webkit-text-stroke-width:0;">商品类型</div>
<svg class="b" style="left:1387px;top:581px" width="10" height="16" viewBox="0 0 10 16" fill="none"><path d="M1.5 5.5 L5 2 L8.5 5.5 M1.5 10.5 L5 14 L8.5 10.5" stroke="#8c8c8c" stroke-width="1.3" stroke-linecap="round" stroke-linejoin="round"/></svg>
<div class="b" style="left:1428px;top:581px;width:2px;height:16px;background:#d4d4d4"></div>
<div class="t" style="right:767px;top:577.0px;height:24px;line-height:24px;color:#141414;font-size:17.5px;font-weight:700;-webkit-text-stroke-width:0;">标准售价</div>
<svg class="b" style="left:1486px;top:581px" width="10" height="16" viewBox="0 0 10 16" fill="none"><path d="M1.5 5.5 L5 2 L8.5 5.5 M1.5 10.5 L5 14 L8.5 10.5" stroke="#8c8c8c" stroke-width="1.3" stroke-linecap="round" stroke-linejoin="round"/></svg>
<div class="b" style="left:1578px;top:581px;width:2px;height:16px;background:#d4d4d4"></div>
<div class="t" style="right:617px;top:577.0px;height:24px;line-height:24px;color:#141414;font-size:17.5px;font-weight:700;-webkit-text-stroke-width:0;">特价价格</div>
<svg class="b" style="left:1636px;top:581px" width="10" height="16" viewBox="0 0 10 16" fill="none"><path d="M1.5 5.5 L5 2 L8.5 5.5 M1.5 10.5 L5 14 L8.5 10.5" stroke="#8c8c8c" stroke-width="1.3" stroke-linecap="round" stroke-linejoin="round"/></svg>
<div class="b" style="left:1728px;top:581px;width:2px;height:16px;background:#d4d4d4"></div>
<div class="t" style="right:467px;top:577.0px;height:24px;line-height:24px;color:#141414;font-size:17.5px;font-weight:700;-webkit-text-stroke-width:0;">每单限量</div>
<svg class="b" style="left:1786px;top:581px" width="10" height="16" viewBox="0 0 10 16" fill="none"><path d="M1.5 5.5 L5 2 L8.5 5.5 M1.5 10.5 L5 14 L8.5 10.5" stroke="#8c8c8c" stroke-width="1.3" stroke-linecap="round" stroke-linejoin="round"/></svg>
<div class="b" style="left:1878px;top:581px;width:2px;height:16px;background:#d4d4d4"></div>
<div class="t" style="left:1889px;top:577.0px;height:24px;line-height:24px;color:#141414;font-size:17.5px;font-weight:700;-webkit-text-stroke-width:0;">是否中止</div>
<svg class="b" style="left:1959px;top:581px" width="10" height="16" viewBox="0 0 10 16" fill="none"><path d="M1.5 5.5 L5 2 L8.5 5.5 M1.5 10.5 L5 14 L8.5 10.5" stroke="#8c8c8c" stroke-width="1.3" stroke-linecap="round" stroke-linejoin="round"/></svg>
<div class="b" style="left:2003px;top:581px;width:2px;height:16px;background:#d4d4d4"></div>
<div class="t" style="left:2014px;top:577.0px;height:24px;line-height:24px;color:#141414;font-size:17.5px;font-weight:700;-webkit-text-stroke-width:0;">中止人</div>
<svg class="b" style="left:2070px;top:581px" width="10" height="16" viewBox="0 0 10 16" fill="none"><path d="M1.5 5.5 L5 2 L8.5 5.5 M1.5 10.5 L5 14 L8.5 10.5" stroke="#8c8c8c" stroke-width="1.3" stroke-linecap="round" stroke-linejoin="round"/></svg>
<div class="b" style="left:279px;top:620.2px;width:15.5px;height:15.5px;border:2px solid #cdcdd1;border-radius:2.5px;background:#fff"></div>
<svg class="b" style="left:326px;top:621px" width="19" height="19" viewBox="0 0 19 19" fill="none"><circle cx="9.5" cy="9.5" r="8" stroke="#2b6cf3" stroke-width="1.7"/><path d="M9.5 5.5 V13.5 M5.5 9.5 H13.5" stroke="#2b6cf3" stroke-width="1.7" stroke-linecap="round"/></svg>
<svg class="b" style="left:354px;top:621px" width="19" height="19" viewBox="0 0 19 19" fill="none"><path d="M6 4 V2 H13 V4" stroke="#2b6cf3" stroke-width="1.6"/><path d="M2 4.5 H17" stroke="#2b6cf3" stroke-width="1.7" stroke-linecap="round"/><path d="M3.5 4.5 V17.5 H15.5 V4.5" stroke="#2b6cf3" stroke-width="1.7" stroke-linejoin="round"/><path d="M9.5 8.5 V13.5" stroke="#2b6cf3" stroke-width="1.7" stroke-linecap="round"/></svg>
<div class="t" style="left:403px;top:618.5px;height:24px;line-height:24px;color:#141414;font-size:17.3px;font-weight:400;-webkit-text-stroke-width:0;">1</div>
<div class="b" style="left:260px;top:1069px;width:1912px;height:1px;background:#e8e8e8"></div>
<div class="b" style="left:428px;top:1070px;width:1px;height:40px;background:#ececec"></div>
<div class="b" style="left:260px;top:1110px;width:1912px;height:1px;background:#e8e8e8"></div>
<div class="t" style="left:439px;top:1078.0px;height:24px;line-height:24px;color:#141414;font-size:17.5px;font-weight:700;-webkit-text-stroke-width:0;">合计</div>
<div class="t" style="left:789px;top:1078.0px;height:24px;line-height:24px;color:#141414;font-size:17.5px;font-weight:700;-webkit-text-stroke-width:0;">货品数: 0</div>
<div class="b" style="left:260px;top:1111px;width:1912px;height:14px;background:#fbfbfb"></div>
<svg class="b" style="left:262px;top:1111px" width="8" height="12" viewBox="0 0 8 12" fill="none"><path d="M6 1.5 L1 6 L6 10.5 Z" fill="#777"/></svg>
<svg class="b" style="left:418px;top:1111px" width="8" height="12" viewBox="0 0 8 12" fill="none"><path d="M1.5 1.5 L6.5 6 L1.5 10.5 Z" fill="#777"/></svg>
<div class="b" style="left:429px;top:1111px;width:1px;height:14px;background:#e6e6e6"></div>
<svg class="b" style="left:433px;top:1111px" width="8" height="12" viewBox="0 0 8 12" fill="none"><path d="M6 1.5 L1 6 L6 10.5 Z" fill="#777"/></svg>
<div class="b" style="left:443px;top:1113px;width:1005px;height:8px;background:#8a8a8a;border-radius:4px"></div>
<svg class="b" style="left:2161px;top:1111px" width="8" height="12" viewBox="0 0 8 12" fill="none"><path d="M1.5 1.5 L6.5 6 L1.5 10.5 Z" fill="#777"/></svg>
<div class="b" style="left:2172px;top:568px;width:163px;height:557px;background:#f9fafb;border-left:1px solid #e8e8e8"></div>
<div class="b" style="left:2173px;top:609px;width:162px;height:1px;background:#e8e8e8"></div>
<div class="t" style="left:2183.5px;top:577.5px;height:24px;line-height:24px;color:#141414;font-size:17.5px;font-weight:400;">显示</div>
<div class="b" style="left:2173px;top:610px;width:162px;height:472px;overflow:hidden">
<div class="b" style="left:10px;top:10px;width:20px;height:20px;background:#2b6cf3;border-radius:3px"></div>
<svg class="b" style="left:10px;top:10px" width="20" height="20" viewBox="0 0 20 20" fill="none"><path d="M4.5 10.2 L8.3 13.8 L15.5 6" stroke="#fff" stroke-width="2" stroke-linecap="round" stroke-linejoin="round"/></svg>
<svg class="b" style="left:44px;top:15px" width="13" height="12" viewBox="0 0 13 12"><path d="M0 1 H13 M0 6 H13 M0 11 H13" stroke="#cfcfcf" stroke-width="1.5"/></svg>
<div class="t" style="left:70px;top:9px;height:24px;line-height:24px;color:#141414;font-size:17.5px">商品代码</div>
<div class="b" style="left:10px;top:40px;width:20px;height:20px;background:#2b6cf3;border-radius:3px"></div>
<svg class="b" style="left:10px;top:40px" width="20" height="20" viewBox="0 0 20 20" fill="none"><path d="M4.5 10.2 L8.3 13.8 L15.5 6" stroke="#fff" stroke-width="2" stroke-linecap="round" stroke-linejoin="round"/></svg>
<svg class="b" style="left:44px;top:45px" width="13" height="12" viewBox="0 0 13 12"><path d="M0 1 H13 M0 6 H13 M0 11 H13" stroke="#cfcfcf" stroke-width="1.5"/></svg>
<div class="t" style="left:70px;top:39px;height:24px;line-height:24px;color:#141414;font-size:17.5px">商品条码</div>
<div class="b" style="left:10px;top:70px;width:20px;height:20px;background:#2b6cf3;border-radius:3px"></div>
<svg class="b" style="left:10px;top:70px" width="20" height="20" viewBox="0 0 20 20" fill="none"><path d="M4.5 10.2 L8.3 13.8 L15.5 6" stroke="#fff" stroke-width="2" stroke-linecap="round" stroke-linejoin="round"/></svg>
<svg class="b" style="left:44px;top:75px" width="13" height="12" viewBox="0 0 13 12"><path d="M0 1 H13 M0 6 H13 M0 11 H13" stroke="#cfcfcf" stroke-width="1.5"/></svg>
<div class="t" style="left:70px;top:69px;height:24px;line-height:24px;color:#141414;font-size:17.5px">商品名称</div>
<div class="b" style="left:10px;top:100px;width:20px;height:20px;background:#2b6cf3;border-radius:3px"></div>
<svg class="b" style="left:10px;top:100px" width="20" height="20" viewBox="0 0 20 20" fill="none"><path d="M4.5 10.2 L8.3 13.8 L15.5 6" stroke="#fff" stroke-width="2" stroke-linecap="round" stroke-linejoin="round"/></svg>
<svg class="b" style="left:44px;top:105px" width="13" height="12" viewBox="0 0 13 12"><path d="M0 1 H13 M0 6 H13 M0 11 H13" stroke="#cfcfcf" stroke-width="1.5"/></svg>
<div class="t" style="left:70px;top:99px;height:24px;line-height:24px;color:#141414;font-size:17.5px">商品别称</div>
<div class="b" style="left:10px;top:130px;width:20px;height:20px;background:#2b6cf3;border-radius:3px"></div>
<svg class="b" style="left:10px;top:130px" width="20" height="20" viewBox="0 0 20 20" fill="none"><path d="M4.5 10.2 L8.3 13.8 L15.5 6" stroke="#fff" stroke-width="2" stroke-linecap="round" stroke-linejoin="round"/></svg>
<svg class="b" style="left:44px;top:135px" width="13" height="12" viewBox="0 0 13 12"><path d="M0 1 H13 M0 6 H13 M0 11 H13" stroke="#cfcfcf" stroke-width="1.5"/></svg>
<div class="t" style="left:70px;top:129px;height:24px;line-height:24px;color:#141414;font-size:17.5px">基本单位</div>
<div class="b" style="left:10px;top:160px;width:20px;height:20px;background:#2b6cf3;border-radius:3px"></div>
<svg class="b" style="left:10px;top:160px" width="20" height="20" viewBox="0 0 20 20" fill="none"><path d="M4.5 10.2 L8.3 13.8 L15.5 6" stroke="#fff" stroke-width="2" stroke-linecap="round" stroke-linejoin="round"/></svg>
<svg class="b" style="left:44px;top:165px" width="13" height="12" viewBox="0 0 13 12"><path d="M0 1 H13 M0 6 H13 M0 11 H13" stroke="#cfcfcf" stroke-width="1.5"/></svg>
<div class="t" style="left:70px;top:159px;height:24px;line-height:24px;color:#141414;font-size:17.5px">商品类型</div>
<div class="b" style="left:10px;top:190px;width:20px;height:20px;background:#2b6cf3;border-radius:3px"></div>
<svg class="b" style="left:10px;top:190px" width="20" height="20" viewBox="0 0 20 20" fill="none"><path d="M4.5 10.2 L8.3 13.8 L15.5 6" stroke="#fff" stroke-width="2" stroke-linecap="round" stroke-linejoin="round"/></svg>
<svg class="b" style="left:44px;top:195px" width="13" height="12" viewBox="0 0 13 12"><path d="M0 1 H13 M0 6 H13 M0 11 H13" stroke="#cfcfcf" stroke-width="1.5"/></svg>
<div class="t" style="left:70px;top:189px;height:24px;line-height:24px;color:#141414;font-size:17.5px">标准售价</div>
<div class="b" style="left:10px;top:220px;width:20px;height:20px;background:#2b6cf3;border-radius:3px"></div>
<svg class="b" style="left:10px;top:220px" width="20" height="20" viewBox="0 0 20 20" fill="none"><path d="M4.5 10.2 L8.3 13.8 L15.5 6" stroke="#fff" stroke-width="2" stroke-linecap="round" stroke-linejoin="round"/></svg>
<svg class="b" style="left:44px;top:225px" width="13" height="12" viewBox="0 0 13 12"><path d="M0 1 H13 M0 6 H13 M0 11 H13" stroke="#cfcfcf" stroke-width="1.5"/></svg>
<div class="t" style="left:70px;top:219px;height:24px;line-height:24px;color:#141414;font-size:17.5px">特价价格</div>
<div class="b" style="left:10px;top:250px;width:20px;height:20px;background:#2b6cf3;border-radius:3px"></div>
<svg class="b" style="left:10px;top:250px" width="20" height="20" viewBox="0 0 20 20" fill="none"><path d="M4.5 10.2 L8.3 13.8 L15.5 6" stroke="#fff" stroke-width="2" stroke-linecap="round" stroke-linejoin="round"/></svg>
<svg class="b" style="left:44px;top:255px" width="13" height="12" viewBox="0 0 13 12"><path d="M0 1 H13 M0 6 H13 M0 11 H13" stroke="#cfcfcf" stroke-width="1.5"/></svg>
<div class="t" style="left:70px;top:249px;height:24px;line-height:24px;color:#141414;font-size:17.5px">每单限量</div>
<div class="b" style="left:10px;top:280px;width:16px;height:16px;border:2px solid #cdcdd1;border-radius:2.5px;background:#fff"></div>
<svg class="b" style="left:44px;top:285px" width="13" height="12" viewBox="0 0 13 12"><path d="M0 1 H13 M0 6 H13 M0 11 H13" stroke="#cfcfcf" stroke-width="1.5"/></svg>
<div class="t" style="left:70px;top:279px;height:24px;line-height:24px;color:#141414;font-size:17.5px">最近进价</div>
<div class="b" style="left:10px;top:310px;width:16px;height:16px;border:2px solid #cdcdd1;border-radius:2.5px;background:#fff"></div>
<svg class="b" style="left:44px;top:315px" width="13" height="12" viewBox="0 0 13 12"><path d="M0 1 H13 M0 6 H13 M0 11 H13" stroke="#cfcfcf" stroke-width="1.5"/></svg>
<div class="t" style="left:70px;top:309px;height:24px;line-height:24px;color:#141414;font-size:17.5px">配送价</div>
<div class="b" style="left:10px;top:340px;width:16px;height:16px;border:2px solid #cdcdd1;border-radius:2.5px;background:#fff"></div>
<svg class="b" style="left:44px;top:345px" width="13" height="12" viewBox="0 0 13 12"><path d="M0 1 H13 M0 6 H13 M0 11 H13" stroke="#cfcfcf" stroke-width="1.5"/></svg>
<div class="t" style="left:70px;top:339px;height:24px;line-height:24px;color:#141414;font-size:17.5px">档案进货价</div>
<div class="b" style="left:10px;top:370px;width:16px;height:16px;border:2px solid #cdcdd1;border-radius:2.5px;background:#fff"></div>
<svg class="b" style="left:44px;top:375px" width="13" height="12" viewBox="0 0 13 12"><path d="M0 1 H13 M0 6 H13 M0 11 H13" stroke="#cfcfcf" stroke-width="1.5"/></svg>
<div class="t" style="left:70px;top:369px;height:24px;line-height:24px;color:#141414;font-size:17.5px">档案允许折扣</div>
<div class="b" style="left:10px;top:400px;width:16px;height:16px;border:2px solid #cdcdd1;border-radius:2.5px;background:#fff"></div>
<svg class="b" style="left:44px;top:405px" width="13" height="12" viewBox="0 0 13 12"><path d="M0 1 H13 M0 6 H13 M0 11 H13" stroke="#cfcfcf" stroke-width="1.5"/></svg>
<div class="t" style="left:70px;top:399px;height:24px;line-height:24px;color:#141414;font-size:17.5px">门店允许折扣</div>
<div class="b" style="left:10px;top:430px;width:20px;height:20px;background:#2b6cf3;border-radius:3px"></div>
<svg class="b" style="left:10px;top:430px" width="20" height="20" viewBox="0 0 20 20" fill="none"><path d="M4.5 10.2 L8.3 13.8 L15.5 6" stroke="#fff" stroke-width="2" stroke-linecap="round" stroke-linejoin="round"/></svg>
<svg class="b" style="left:44px;top:435px" width="13" height="12" viewBox="0 0 13 12"><path d="M0 1 H13 M0 6 H13 M0 11 H13" stroke="#cfcfcf" stroke-width="1.5"/></svg>
<div class="t" style="left:70px;top:429px;height:24px;line-height:24px;color:#141414;font-size:17.5px">是否中止</div>
<div class="b" style="left:10px;top:460px;width:20px;height:20px;background:#2b6cf3;border-radius:3px"></div>
<svg class="b" style="left:10px;top:460px" width="20" height="20" viewBox="0 0 20 20" fill="none"><path d="M4.5 10.2 L8.3 13.8 L15.5 6" stroke="#fff" stroke-width="2" stroke-linecap="round" stroke-linejoin="round"/></svg>
<svg class="b" style="left:44px;top:465px" width="13" height="12" viewBox="0 0 13 12"><path d="M0 1 H13 M0 6 H13 M0 11 H13" stroke="#cfcfcf" stroke-width="1.5"/></svg>
<div class="t" style="left:70px;top:459px;height:24px;line-height:24px;color:#141414;font-size:17.5px">中止人</div>
</div>
<div class="b" style="left:2173px;top:1082px;width:162px;height:1px;background:#e8e8e8"></div>
<div class="b" style="left:2173px;top:1123px;width:162px;height:1px;background:#e8e8e8"></div>
<svg class="b" style="left:0;top:0" width="2335" height="1125" viewBox="0 0 2335 1125"><path d="M566.9 404 L399 591 L393 586 L380.3 618.8 L412 602.4 L406 597.5 L567.7 404.5 Z" fill="#f24e4e" stroke="#f24e4e" stroke-width="0.8" stroke-linejoin="round"/></svg>
</body></html>
